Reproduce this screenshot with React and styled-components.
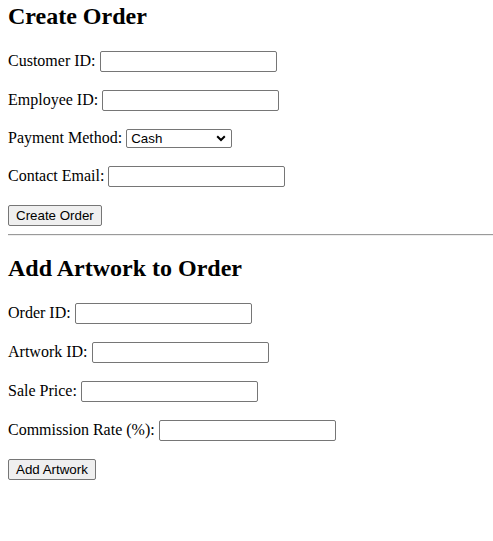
import React from "react";
import styled, { createGlobalStyle } from "styled-components";

const GlobalStyle = createGlobalStyle`
  body {
    margin: 0;
    background: #fff;
    color: #000;
    font-family: "Liberation Serif", "Times New Roman", serif;
    font-size: 16px;
  }
`;

const Page = styled.div`
  padding: 0 8px;
`;

const Heading = styled.h2`
  margin: ${(p) => (p.$first ? "3px" : "19px")} 0 21px;
  font-size: 24px;
  line-height: 27px;
  font-weight: bold;
`;

const Form = styled.form`
  display: flex;
  flex-direction: column;
  align-items: flex-start;
`;

const Row = styled.div`
  display: flex;
  align-items: baseline;
  margin-bottom: 18px;
  line-height: 18px;
`;

const Label = styled.label`
  margin-right: 4px;
`;

const TextInput = styled.input`
  box-sizing: border-box;
  width: 177px;
  height: 21px;
  padding: 1px 2px;
  border: 1px solid #767676;
  border-radius: 2px;
  font-family: "Liberation Sans", Arial, sans-serif;
  font-size: 13.33px;
  background: #fff;
`;

const SelectWrap = styled.span`
  position: relative;
  display: inline-flex;
`;

const Select = styled.select`
  appearance: none;
  box-sizing: border-box;
  width: 106px;
  height: 19px;
  padding: 0 18px 0 4px;
  border: 1px solid #767676;
  border-radius: 2px;
  background: #fff;
  color: #000;
  font-family: "Liberation Sans", Arial, sans-serif;
  font-size: 13.33px;
`;

const Chevron = styled.svg`
  position: absolute;
  right: 6px;
  top: 6px;
  width: 10px;
  height: 7px;
  pointer-events: none;
`;

const Button = styled.button`
  box-sizing: border-box;
  height: 21px;
  padding: 1px 7px;
  border: 1px solid #767676;
  border-radius: 2px;
  background: #efefef;
  color: #000;
  font-family: "Liberation Sans", Arial, sans-serif;
  font-size: 13.33px;
`;

const Divider = styled.hr`
  margin: 8px -8px 0 0;
  height: 0;
  border: none;
  border-top: 1px solid #9a9a9a;
  border-bottom: 1px solid #eeeeee;
`;

const Field = ({ label, id, children }) => (
  <Row>
    <Label htmlFor={id}>{label}:</Label>
    {children || <TextInput id={id} type="text" />}
  </Row>
);

export default function App() {
  return (
    <Page>
      <GlobalStyle />
      <Heading $first>Create Order</Heading>
      <Form onSubmit={(e) => e.preventDefault()}>
        <Field label="Customer ID" id="customer" />
        <Field label="Employee ID" id="employee" />
        <Field label="Payment Method" id="payment">
          <SelectWrap>
            <Select id="payment" defaultValue="Cash">
              <option>Cash</option>
              <option>Credit Card</option>
              <option>Check</option>
            </Select>
            <Chevron viewBox="0 0 10 7">
              <path d="M1.2 1.3 L5 5 L8.8 1.3" fill="none" stroke="#000" strokeWidth="2" />
            </Chevron>
          </SelectWrap>
        </Field>
        <Field label="Contact Email" id="email" />
        <Button type="submit">Create Order</Button>
      </Form>
      <Divider />
      <Heading>Add Artwork to Order</Heading>
      <Form onSubmit={(e) => e.preventDefault()}>
        <Field label="Order ID" id="order" />
        <Field label="Artwork ID" id="artwork" />
        <Field label="Sale Price" id="price" />
        <Field label="Commission Rate (%)" id="rate" />
        <Button type="submit">Add Artwork</Button>
      </Form>
    </Page>
  );
}
